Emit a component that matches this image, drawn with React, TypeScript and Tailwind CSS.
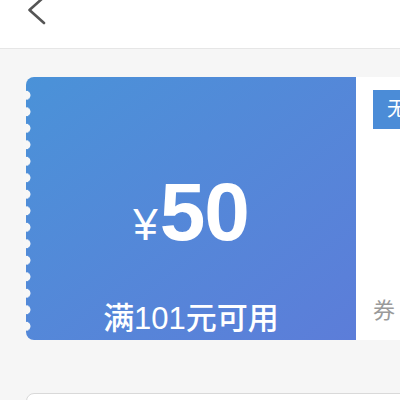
import React from "react";

const FONT = { fontFamily: '"Liberation Sans", Arial, "Noto Sans CJK SC", sans-serif' };

function BackIcon() {
  return (
    <svg width="22" height="32" viewBox="0 0 22 32" className="ml-[28px] -mt-[5px]">
      <polyline
        points="16,2 1.5,15 16,28"
        fill="none"
        stroke="#555"
        strokeWidth="2.6"
        strokeLinecap="round"
        strokeLinejoin="round"
      />
    </svg>
  );
}

export default function App() {
  return (
    <div className="w-[400px] h-[400px] overflow-hidden bg-[#f6f6f6] flex flex-col" style={FONT}>
      {/* Header */}
      <div className="h-[49px] shrink-0 bg-white border-b border-[#e6e6e6] flex items-start">
        <BackIcon />
      </div>

      {/* Coupon list */}
      <div className="flex flex-col pl-[26px] pt-[28px] gap-[53px]">
        <div className="flex h-[263px] w-[420px] shrink-0">
          {/* Blue face */}
          <div className="relative shrink-0 w-[330px] h-full rounded-l-lg bg-gradient-to-br from-[#4a92d8] to-[#5c7dd9] flex flex-col items-center text-white">
            <div className="absolute left-[-3px] top-[10px] bottom-[6px] w-[8px] bg-[radial-gradient(circle_at_3px_50%,#f7f7f7_4.2px,transparent_4.8px)] bg-[length:8px_16.5px]" />
            <div className="flex items-end mt-[94px] leading-none">
              <span className="text-[44px] mb-[6px] mr-[2px]">¥</span>
              <span className="text-[82px] font-bold tracking-[-1px]">50</span>
            </div>
            <div className="mt-auto mb-[6px] text-[31px] leading-none font-medium">
              满101元可用
            </div>
          </div>

          {/* White side */}
          <div className="flex-1 min-w-0 bg-white flex flex-col pl-[17px]">
            <div className="mt-[13px] h-[39px] w-[120px] bg-[#4b8cd7] text-white text-[20px] leading-[39px] pl-[14px] whitespace-nowrap">
              无门槛
            </div>
            <div className="mt-auto mb-[18px] text-[22px] leading-none text-[#9a9a9a] whitespace-nowrap">
              券
            </div>
          </div>
        </div>

        <div className="w-[420px] h-[120px] shrink-0 bg-white border border-[#d9d9d9] rounded-lg" />
      </div>
    </div>
  );
}
